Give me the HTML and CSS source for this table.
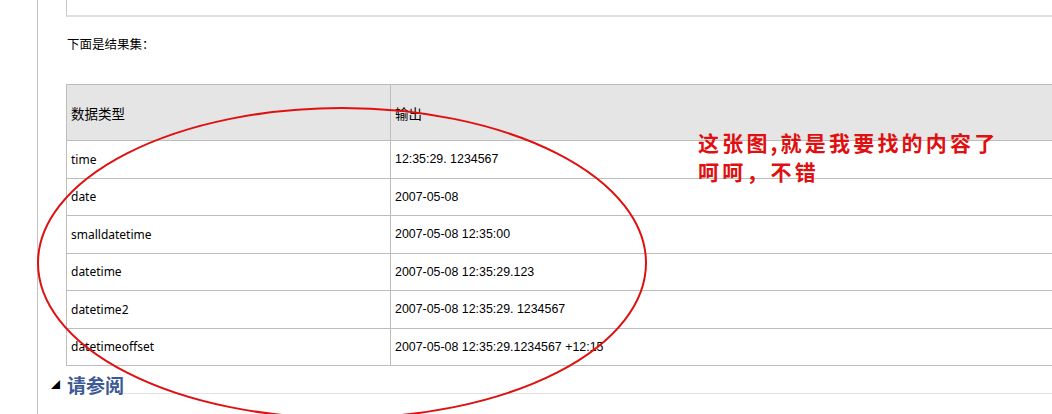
FILE: index.html
```html
<!DOCTYPE html>
<html lang="zh-CN">
<head>
<meta charset="utf-8">
<title>结果集</title>
<link rel="stylesheet" href="styles.css">
</head>
<body>
<div class="page">
  <div class="rail">
    <div class="content">
      <div class="topbox"></div>
      <p class="intro">下面是结果集：</p>
      <table class="results">
        <thead>
          <tr><th class="c1">数据类型</th><th class="c2">输出</th></tr>
        </thead>
        <tbody>
          <tr><td class="c1">time</td><td class="c2">12:35:29. 1234567</td></tr>
          <tr><td class="c1">date</td><td class="c2">2007-05-08</td></tr>
          <tr><td class="c1">smalldatetime</td><td class="c2">2007-05-08 12:35:00</td></tr>
          <tr><td class="c1">datetime</td><td class="c2">2007-05-08 12:35:29.123</td></tr>
          <tr><td class="c1">datetime2</td><td class="c2">2007-05-08 12:35:29. 1234567</td></tr>
          <tr><td class="c1">datetimeoffset</td><td class="c2">2007-05-08 12:35:29.1234567 +12:15</td></tr>
        </tbody>
      </table>
      <h2 class="seealso"><span class="tri">◢</span><span class="seetext">请参阅</span></h2>
    </div>
  </div>
  <svg class="ring" width="1052" height="414" viewBox="0 0 1052 414" aria-hidden="true">
    <ellipse cx="342" cy="263" rx="304" ry="155" fill="none" stroke="#e01010" stroke-width="2"/>
  </svg>
  <div class="note">这张图,就是我要找的内容了<br>呵呵，不错</div>
</div>
</body>
</html>
```
FILE: styles.css
```css
html, body {
  margin: 0;
  padding: 0;
  background: #ffffff;
}
body {
  width: 1052px;
  height: 414px;
  overflow: hidden;
  font-family: "Noto Sans", "Noto Sans CJK SC", sans-serif;
  color: #000;
}
.page {
  position: relative;
  width: 1052px;
  height: 414px;
  overflow: hidden;
}
.rail {
  margin-left: 37px;
  height: 414px;
  border-left: 1px solid #c4c4c4;
}
.content {
  padding-left: 28px;
}
.topbox {
  height: 15px;
  border-left: 1px solid #c8c8c8;
  border-bottom: 2px solid #e0e0e0;
}
.intro {
  margin: 19px 0 0 1px;
  font-family: "Noto Sans CJK SC", sans-serif;
  font-size: 12.5px;
  line-height: 16px;
}
.results {
  margin-top: 32px;
  border-collapse: collapse;
  width: 1010px;
  table-layout: fixed;
}
.results th, .results td {
  border: 1px solid #bdbdbd;
  padding: 0 4px;
  text-align: left;
  vertical-align: middle;
}
.results th {
  background: #e5e5e5;
  height: 55px;
  font-family: "Noto Sans CJK SC", sans-serif;
  font-weight: normal;
  font-size: 13.5px;
}
.results td {
  height: 36.5px;
  font-size: 12px;
}
.results .c1 {
  width: 315px;
  font-family: "Noto Sans", "Noto Sans CJK SC", sans-serif;
}
.results td.c2 {
  font-family: "Liberation Sans", sans-serif;
  font-size: 12.4px;
}
.results th.c1 {
  font-family: "Noto Sans CJK SC", sans-serif;
}
.seealso {
  position: relative;
  margin: 7px 0 0 1px;
  height: 20px;
  border-bottom: 1px solid #e3e3e3;
  font-family: "Noto Sans CJK SC", sans-serif;
  font-size: 19px;
  line-height: 24px;
  font-weight: bold;
  color: #3d5996;
}
.seetext {
  background: #fff;
}
.tri {
  position: absolute;
  left: -16px;
  top: 7px;
  font-size: 9px;
  line-height: 10px;
  color: #000;
}
.ring {
  position: absolute;
  left: 0;
  top: 0;
  pointer-events: none;
}
.note {
  position: absolute;
  left: 698px;
  top: 128px;
  font-family: "Noto Sans CJK SC", sans-serif;
  font-weight: bold;
  font-size: 21px;
  line-height: 29px;
  letter-spacing: 3.2px;
  color: #e01010;
}
```
